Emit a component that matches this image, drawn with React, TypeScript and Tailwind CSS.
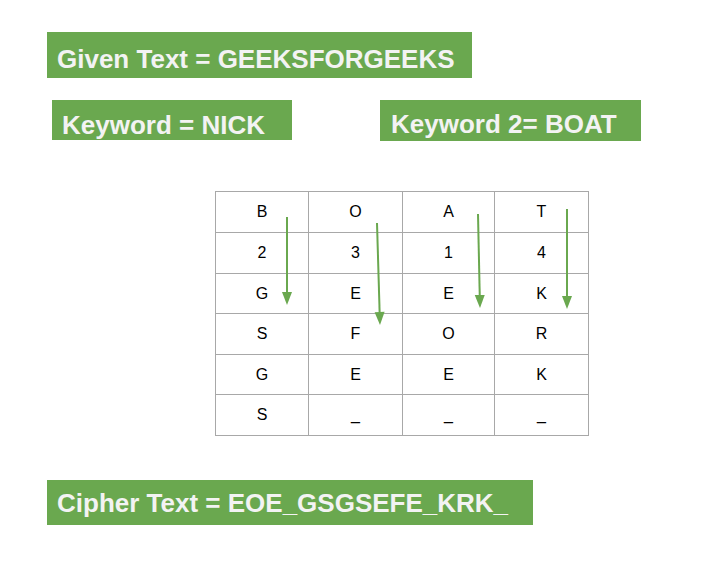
import React from "react";

const rows: string[][] = [
  ["B", "O", "A", "T"],
  ["2", "3", "1", "4"],
  ["G", "E", "E", "K"],
  ["S", "F", "O", "R"],
  ["G", "E", "E", "K"],
  ["S", "_", "_", "_"],
];

const rowHeights = ["h-[40px]", "h-[40px]", "h-[39px]", "h-[40px]", "h-[39px]", "h-[40px]"];

function Arrow({ x1, y1, x2, y2 }: { x1: number; y1: number; x2: number; y2: number }) {
  const dx = x2 - x1;
  const dy = y2 - y1;
  const len = Math.sqrt(dx * dx + dy * dy);
  const ux = dx / len;
  const uy = dy / len;
  const hl = 13;
  const hw = 5;
  const bx = x2 - ux * hl;
  const by = y2 - uy * hl;
  const px = -uy;
  const py = ux;
  return (
    <g>
      <line x1={x1} y1={y1} x2={bx} y2={by} stroke="#6aa84f" strokeWidth={2} />
      <polygon
        points={`${x2},${y2} ${bx + px * hw},${by + py * hw} ${bx - px * hw},${by - py * hw}`}
        fill="#6aa84f"
      />
    </g>
  );
}

export default function App() {
  const font = { fontFamily: '"Liberation Sans", Arial, sans-serif' };
  return (
    <div className="w-[723px] h-[582px] bg-white flex flex-col" style={font}>
      <div className="ml-[47px] mt-[32px] w-[425px] h-[46px] bg-[#6aa84f] text-[#f3f3f3] font-bold text-[26px] leading-[26px] pl-[10px] pt-[14px]">
        Given Text = GEEKSFORGEEKS
      </div>
      <div className="flex mt-[22px]">
        <div className="ml-[52px] w-[240px] h-[40px] bg-[#6aa84f] text-[#f3f3f3] font-bold text-[26px] leading-[26px] pl-[10px] pt-[12px] whitespace-nowrap">
          Keyword = NICK
        </div>
        <div className="ml-[88px] w-[261px] h-[41px] bg-[#6aa84f] text-[#f3f3f3] font-bold text-[26px] leading-[26px] pl-[11px] pt-[11px] whitespace-nowrap">
          Keyword 2= BOAT
        </div>
      </div>
      <div className="ml-[215px] mt-[50px] relative w-[374px]">
        <div className="grid grid-cols-[92px_93px_91px_93px] gap-px bg-[#a8a8a8] border border-[#a8a8a8]">
          {rows.map((r, i) =>
            r.map((c, j) => (
              <div
                key={`${i}-${j}`}
                className={`${rowHeights[i]} bg-white flex items-center justify-center text-[16px] text-black`}
              >
                {c}
              </div>
            ))
          )}
        </div>
        <svg className="absolute left-0 top-0 pointer-events-none" width={374} height={245}>
          <Arrow x1={72} y1={26} x2={72} y2={114} />
          <Arrow x1={162} y1={32} x2={165} y2={134} />
          <Arrow x1={263} y1={23} x2={265} y2={117} />
          <Arrow x1={352} y1={18} x2={352} y2={118} />
        </svg>
      </div>
      <div className="ml-[47px] mt-[44px] w-[486px] h-[45px] bg-[#6aa84f] text-[#f3f3f3] font-bold text-[26px] leading-[26px] pl-[10px] pt-[10px] whitespace-nowrap">
        Cipher Text = EOE_GSGSEFE_KRK_
      </div>
    </div>
  );
}
